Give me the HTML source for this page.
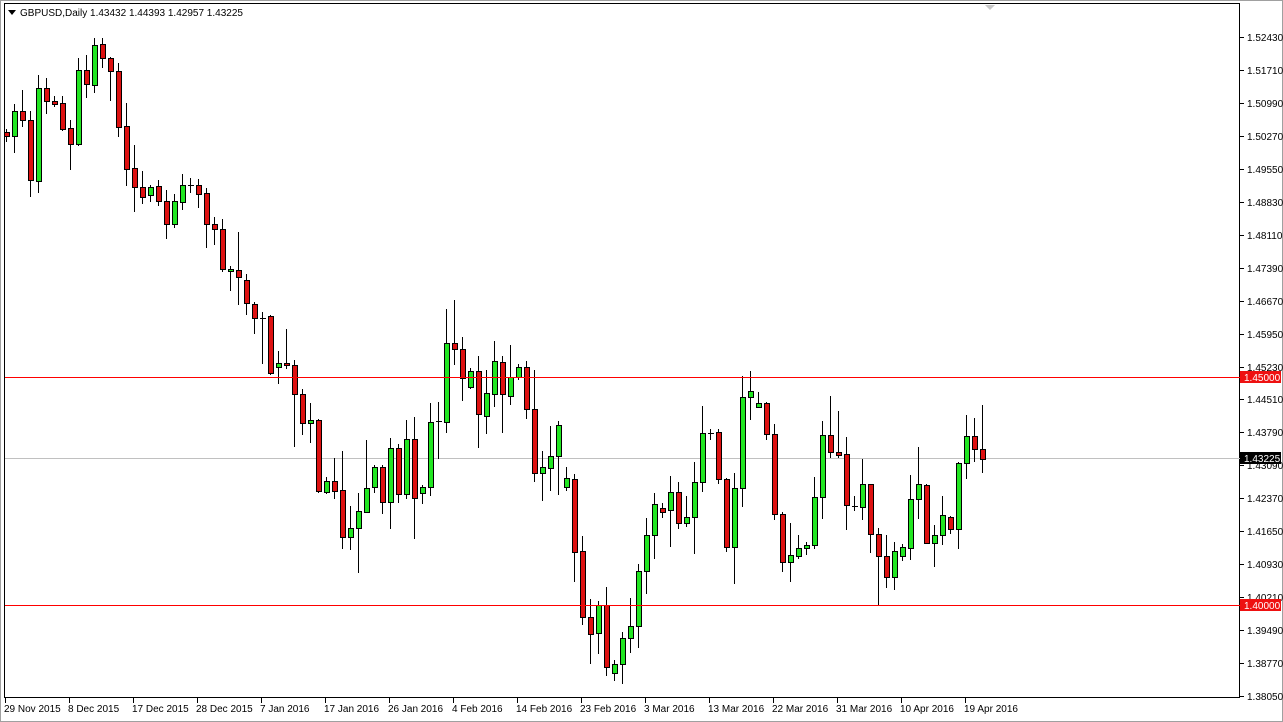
<!DOCTYPE html>
<html><head><meta charset="utf-8"><style>
html,body{margin:0;padding:0;background:#fff;width:1283px;height:722px;overflow:hidden;position:relative}
svg{display:block;position:absolute;left:0;top:0}
text{font-family:"Liberation Sans",Arial,sans-serif;font-size:10px;fill:#000}
.hl{position:absolute;left:5px;width:1235px;height:1px;background:#ff0000;z-index:2}
</style></head><body>
<svg id="s" width="1283" height="722" viewBox="0 0 1283 722" xmlns="http://www.w3.org/2000/svg">
<rect x="0" y="0" width="1283" height="722" fill="#fff"/>
<rect x="0.5" y="0.5" width="1282" height="721" fill="none" stroke="#a0a0a0"/>
<rect x="4.5" y="3.5" width="1235" height="694" fill="none" stroke="#000"/>
<rect x="5" y="458" width="1235" height="1" fill="#c0c0c0"/>
<polygon points="985,5 995,5 990,10" fill="#c8c8c8"/>
<g id="c" shape-rendering="crispEdges"></g>
<polygon points="8,10 16,10 12,15" fill="#000"/>
<text x="20" y="16">GBPUSD,Daily  1.43432 1.44393 1.42957 1.43225</text>
<g id="ax"></g>
<rect x="1240" y="371" width="41" height="12" fill="#ee1111"/>
<text x="1244" y="381" style="fill:#fff">1.45000</text>
<rect x="1240" y="452" width="41" height="12" fill="#000"/>
<text x="1244" y="462" style="fill:#fff">1.43225</text>
<rect x="1240" y="599" width="41" height="12" fill="#ee1111"/>
<text x="1244" y="609" style="fill:#fff">1.40000</text>
<g id="dt"></g>
</svg>
<div class="hl" style="top:377px"></div>
<div class="hl" style="top:605px"></div>
<script>
var d=[
['r',132,136,129,141],['g',111,136,104,152],['r',111,120,90,126],['r',120,180,111,196],['g',88,181,75,192],
['r',88,101,78,113],['r',101,104,96,106],['r',103,129,96,130],['r',128,144,120,169],['g',70,144,58,145],
['r',70,84,55,97],['g',45,85,38,92],['r',44,58,38,67],['r',58,71,57,100],['r',71,127,63,136],
['r',126,169,103,185],['r',168,187,145,211],['r',187,197,171,203],['g',187,195,185,201],['r',186,201,180,205],
['r',201,224,190,238],['g',201,224,194,227],['g',185,202,174,209],['d',185,185,178,192],['r',185,194,179,207],
['r',193,224,188,247],['r',224,229,217,244],['r',229,269,219,271],['g',269,271,266,290],['r',270,277,232,304],
['r',280,303,274,314],['r',304,318,302,333],['d',318,318,312,363],['r',316,373,315,374],['g',363,367,351,383],
['r',363,365,329,368],['r',365,394,360,446],['r',394,423,389,434],['g',420,423,403,442],['r',420,491,419,492],
['g',481,492,477,493],['r',481,491,458,498],['r',490,537,451,548],['g',528,537,506,549],['g',511,528,493,572],
['g',488,512,440,512],['g',467,487,465,492],['r',467,502,465,513],['g',448,502,438,528],['r',448,494,444,502],
['g',439,494,420,498],['r',439,498,417,538],['g',487,493,485,503],['g',422,487,403,495],['d',421,421,402,458],
['g',343,422,309,432],['r',343,349,300,364],['r',349,378,337,400],['g',371,387,368,388],['r',371,414,356,447],
['g',393,416,370,433],['g',361,394,341,406],['r',362,394,356,432],['g',377,396,345,404],['g',367,377,364,379],
['r',367,409,361,418],['r',409,473,370,481],['g',467,473,451,500],['g',456,468,426,490],['g',425,456,421,494],
['g',478,487,467,490],['r',479,552,474,581],['r',551,617,536,624],['r',617,634,599,663],['g',605,633,601,653],
['r',605,667,587,675],['g',664,673,660,680],['g',638,664,632,683],['g',626,638,598,652],['g',571,626,564,647],
['g',535,571,518,593],['g',504,535,493,558],['r',508,512,503,517],['g',492,510,476,546],['r',492,523,482,528],
['g',517,523,496,526],['g',482,517,462,553],['g',433,482,406,491],['d',433,433,429,439],['r',432,479,429,483],
['r',479,547,478,551],['g',488,547,473,583],['g',397,488,376,506],['g',391,397,371,419],['g',403,407,392,407],
['r',403,434,402,439],['r',434,514,424,519],['r',514,562,512,571],['g',555,562,523,581],['g',548,556,535,558],
['g',545,548,542,554],['g',497,545,477,548],['g',435,497,421,518],['r',435,452,396,457],['r',452,455,411,457],
['r',454,505,437,529],['d',506,506,496,510],['g',484,507,459,519],['r',484,534,484,552],['r',534,556,528,604],
['r',556,577,535,587],['g',551,577,542,589],['g',547,556,544,560],['g',499,548,475,559],['g',484,499,447,518],
['r',485,543,484,543],['g',535,543,525,566],['g',515,535,496,544],['r',517,529,516,533],['g',463,529,462,548],
['g',436,463,415,478],['r',436,449,418,461],['r',449,459,405,472]];
var g=document.getElementById('c'),h='';
d.forEach(function(c,i){var x=6+8*i;
h+='<rect x="'+x+'" y="'+c[3]+'" width="1" height="'+(c[4]-c[3]+1)+'" fill="#000"/>';
if(c[0]=='d'){h+='<rect x="'+(x-2)+'" y="'+c[1]+'" width="6" height="1" fill="#000"/>';}
else{var hh=Math.max(1,c[2]-c[1]);h+='<rect x="'+(x-2+.5)+'" y="'+(c[1]+.5)+'" width="5" height="'+hh+'" fill="'+(c[0]=='g'?'#22e622':'#dd1111')+'" stroke="#000"/>';}
});
g.innerHTML=h;
var ax='',labs=['1.52430','1.51710','1.50990','1.50270','1.49550','1.48830','1.48110','1.47390','1.46670','1.45950','1.45230','1.44510','1.43790','1.43090','1.42370','1.41650','1.40930','1.40210','1.39490','1.38770','1.38050'];
labs.forEach(function(l,i){var y=Math.round(37+i*32.95);ax+='<rect x="1240" y="'+y+'" width="4" height="1" fill="#000"/><text x="1247" y="'+(y+4)+'">'+l+'</text>';});
document.getElementById('ax').innerHTML=ax;
var dts=['29 Nov 2015','8 Dec 2015','17 Dec 2015','28 Dec 2015','7 Jan 2016','17 Jan 2016','26 Jan 2016','4 Feb 2016','14 Feb 2016','23 Feb 2016','3 Mar 2016','13 Mar 2016','22 Mar 2016','31 Mar 2016','10 Apr 2016','19 Apr 2016'],dh='';
dts.forEach(function(t,i){var x=5+64*i;dh+='<rect x="'+x+'" y="698" width="1" height="5" fill="#000"/><text x="'+(x-1)+'" y="712">'+t+'</text>';});
document.getElementById('dt').innerHTML=dh;
</script>
</body></html>
